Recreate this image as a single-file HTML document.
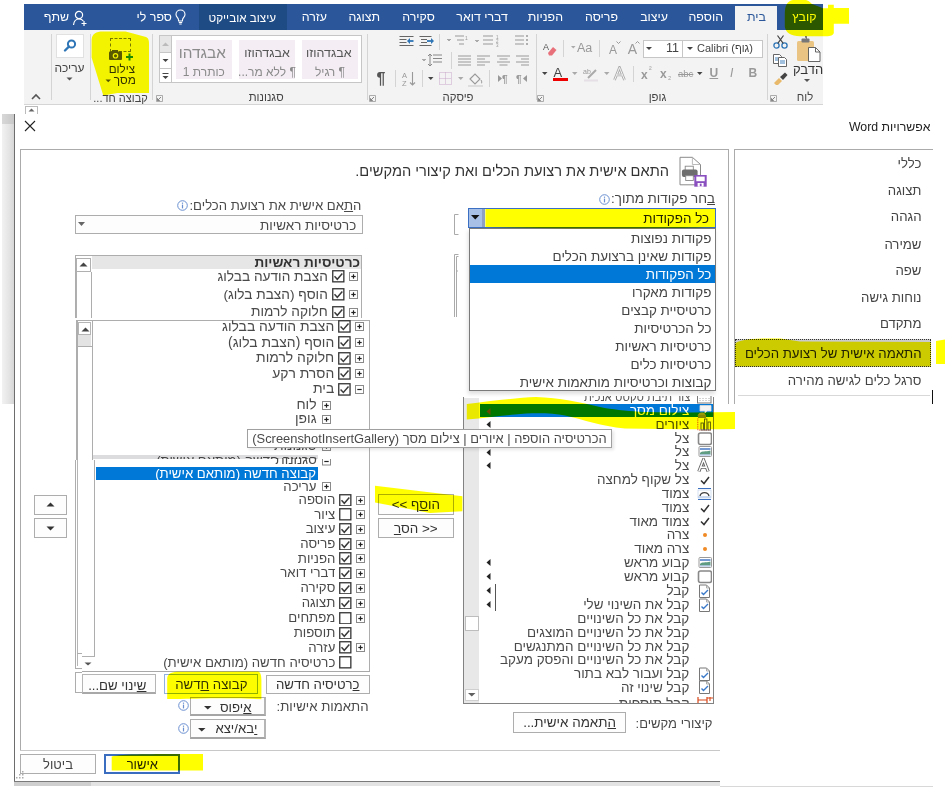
<!DOCTYPE html>
<html><head><meta charset="utf-8"><style>
html,body{margin:0;padding:0;background:#fff;width:945px;height:788px;overflow:hidden}
#r{position:relative;width:945px;height:788px;overflow:hidden;font-family:"Liberation Sans", sans-serif}
#r>*{position:absolute;white-space:nowrap;margin:0;padding:0}
</style></head><body><div id="r">
<div style="left:24px;top:4px;width:799px;height:26px;background:#2b579a;"></div>
<div style="left:199px;top:4px;width:88px;height:26px;background:#1f4b85;"></div>
<div style="left:735px;top:6px;width:42px;height:25px;background:#f3f3f3;"></div>
<div style="left:24px;top:30px;width:799px;height:74px;background:#f3f3f3;"></div>
<div style="left:24px;top:104px;width:799px;height:1px;background:#d5d5d5;"></div>
<div dir="rtl" style="right:876px;top:11.3px;font-size:12.4px;line-height:12.4px;color:#fff;">שתף</div>
<div dir="rtl" style="right:773px;top:11.3px;font-size:12.4px;line-height:12.4px;color:#fff;">ספר לי</div>
<div dir="rtl" style="right:618px;top:11.3px;font-size:12.4px;line-height:12.4px;color:#fff;">עזרה</div>
<div dir="rtl" style="right:565px;top:11.3px;font-size:12.4px;line-height:12.4px;color:#fff;">תצוגה</div>
<div dir="rtl" style="right:510px;top:11.3px;font-size:12.4px;line-height:12.4px;color:#fff;">סקירה</div>
<div dir="rtl" style="right:437px;top:11.3px;font-size:12.4px;line-height:12.4px;color:#fff;">דברי דואר</div>
<div dir="rtl" style="right:382px;top:11.3px;font-size:12.4px;line-height:12.4px;color:#fff;">הפניות</div>
<div dir="rtl" style="right:327px;top:11.3px;font-size:12.4px;line-height:12.4px;color:#fff;">פריסה</div>
<div dir="rtl" style="right:277px;top:11.3px;font-size:12.4px;line-height:12.4px;color:#fff;">עיצוב</div>
<div dir="rtl" style="right:222px;top:11.3px;font-size:12.4px;line-height:12.4px;color:#fff;">הוספה</div>
<div dir="rtl" style="right:128.5px;top:11.3px;font-size:12.4px;line-height:12.4px;color:#fff;">קובץ</div>
<div dir="rtl" style="right:179px;top:11.3px;font-size:12.4px;line-height:12.4px;color:#2b579a;">בית</div>
<div dir="rtl" style="right:669px;top:11.65px;font-size:11.7px;line-height:11.7px;color:#fff;">עיצוב אובייקט</div>
<svg style="left:72px;top:10px;" width="16" height="16" viewBox="0 0 16 16"><circle cx="7" cy="5" r="3.6" fill="none" stroke="#fff" stroke-width="1.2"/><path d="M1.5 15 C2 10.5 4 9 7 9 C9 9 10.5 9.8 11.3 11" fill="none" stroke="#fff" stroke-width="1.2"/><path d="M12 11v5M9.5 13.5h5" stroke="#fff" stroke-width="1.2"/></svg>
<svg style="left:175px;top:9px;" width="11" height="16" viewBox="0 0 11 16"><path d="M5.5 1 C2.8 1 1 3 1 5.4 C1 7.5 2.6 8.6 3.3 10 L3.6 12 H7.4 L7.7 10 C8.4 8.6 10 7.5 10 5.4 C10 3 8.2 1 5.5 1Z" fill="none" stroke="#fff" stroke-width="1.1"/><path d="M3.8 13.5h3.4M4.3 15h2.4" stroke="#fff" stroke-width="1"/></svg>
<div style="left:51.4px;top:34px;width:1px;height:66px;background:#d4d4d4;"></div>
<div style="left:90px;top:34px;width:1px;height:66px;background:#d4d4d4;"></div>
<div style="left:152px;top:34px;width:1px;height:66px;background:#d4d4d4;"></div>
<div style="left:367.4px;top:34px;width:1px;height:66px;background:#d4d4d4;"></div>
<div style="left:535.5px;top:34px;width:1px;height:66px;background:#d4d4d4;"></div>
<div style="left:766.7px;top:34px;width:1px;height:66px;background:#d4d4d4;"></div>
<svg style="left:31px;top:93px;" width="10" height="7" viewBox="0 0 10 7"><path d="M1 6 L5 2 L9 6" fill="none" stroke="#555" stroke-width="1.6"/></svg>
<div style="left:56px;top:34px;width:27.5px;height:24px;background:#fff;box-sizing:border-box;border:1px solid #e1e1e1;"></div>
<svg style="left:62px;top:38px;" width="16" height="16" viewBox="0 0 16 16"><circle cx="9.5" cy="6" r="3.6" fill="none" stroke="#2e75b6" stroke-width="2"/><path d="M7 8.5 L3 12.5" stroke="#2e75b6" stroke-width="2.4" stroke-linecap="round"/></svg>
<div dir="rtl" style="left:-330.5px;width:800px;text-align:center;top:61.5px;font-size:12px;line-height:12px;color:#444;">עריכה</div>
<svg style="left:66px;top:77px;" width="8" height="5" viewBox="0 0 8 5"><path d="M0.5 0.5 H6.5 L3.5 3.5Z" fill="#555"/></svg>
<div style="left:110.2px;top:37.7px;width:20.5px;height:14.3px;box-sizing:border-box;border:1px dashed #777;"></div>
<svg style="left:108px;top:49px;" width="27" height="12" viewBox="0 0 27 12"><rect x="1" y="2.5" width="13" height="8.5" rx="1" fill="#595959"/><rect x="4" y="1" width="6" height="2.5" fill="#595959"/><circle cx="7.5" cy="6.8" r="2.8" fill="#f3f3f3"/><circle cx="7.5" cy="6.8" r="1.6" fill="#595959"/><path d="M21.5 4.5v7M18 8h7" stroke="#1e8a3c" stroke-width="2"/></svg>
<div dir="rtl" style="left:-278.2px;width:800px;text-align:center;top:63.4px;font-size:11.6px;line-height:11.6px;color:#333;">צילום</div>
<div dir="rtl" style="left:-275.2px;width:800px;text-align:center;top:75.1px;font-size:11.8px;line-height:11.8px;color:#333;">מסך</div>
<svg style="left:105px;top:79px;" width="7" height="4" viewBox="0 0 7 4"><path d="M0.5 0.5 H6 L3.25 3.3Z" fill="#555"/></svg>
<div dir="rtl" style="left:-279.5px;width:800px;text-align:center;top:92.5px;font-size:11px;line-height:11px;color:#444;">קבוצה חד...</div>
<svg style="left:156px;top:94.5px;" width="7" height="7" viewBox="0 0 7 7"><path d="M0.5 0.5 H6.5 V6.5 H0.5Z" fill="none" stroke="#999" stroke-width="0.8" stroke-dasharray="0"/><path d="M1.5 5.5 L5 2 M1.5 3.2 V5.5 H3.8" fill="none" stroke="#777" stroke-width="0.9"/></svg>
<svg style="left:368.5px;top:94.5px;" width="7" height="7" viewBox="0 0 7 7"><path d="M0.5 0.5 H6.5 V6.5 H0.5Z" fill="none" stroke="#999" stroke-width="0.8" stroke-dasharray="0"/><path d="M1.5 5.5 L5 2 M1.5 3.2 V5.5 H3.8" fill="none" stroke="#777" stroke-width="0.9"/></svg>
<svg style="left:536.5px;top:94.5px;" width="7" height="7" viewBox="0 0 7 7"><path d="M0.5 0.5 H6.5 V6.5 H0.5Z" fill="none" stroke="#999" stroke-width="0.8" stroke-dasharray="0"/><path d="M1.5 5.5 L5 2 M1.5 3.2 V5.5 H3.8" fill="none" stroke="#777" stroke-width="0.9"/></svg>
<svg style="left:770px;top:94.5px;" width="7" height="7" viewBox="0 0 7 7"><path d="M0.5 0.5 H6.5 V6.5 H0.5Z" fill="none" stroke="#999" stroke-width="0.8" stroke-dasharray="0"/><path d="M1.5 5.5 L5 2 M1.5 3.2 V5.5 H3.8" fill="none" stroke="#777" stroke-width="0.9"/></svg>
<div style="left:159.2px;top:35.3px;width:203.3px;height:48.2px;background:#fff;box-sizing:border-box;border:1px solid #c6c6c6;"></div>
<div style="left:171.4px;top:35.3px;width:1px;height:48.2px;background:#c6c6c6;"></div>
<div style="left:160.2px;top:36.3px;width:11.2px;height:16px;background:#e6e6e6;"></div>
<div style="left:159.2px;top:52.3px;width:12.2px;height:1px;background:#c6c6c6;"></div>
<div style="left:159.2px;top:68px;width:12.2px;height:1px;background:#c6c6c6;"></div>
<svg style="left:161px;top:41px;" width="9" height="6" viewBox="0 0 9 6"><path d="M1 5 L4.5 1.5 L8 5Z" fill="#bbb"/></svg>
<svg style="left:161px;top:58px;" width="9" height="5" viewBox="0 0 9 5"><path d="M1.5 1 H7.5 L4.5 4Z" fill="#444"/></svg>
<svg style="left:161px;top:72px;" width="9" height="9" viewBox="0 0 9 9"><path d="M1.5 1.5 H7.5" stroke="#444" stroke-width="1"/><path d="M1.5 4 H7.5 L4.5 7Z" fill="#444"/></svg>
<div style="left:175.5px;top:40px;width:56.5px;height:38.6px;background:#f4eef4;"></div>
<div style="left:238.8px;top:40px;width:56.5px;height:38.6px;background:#f4eef4;"></div>
<div style="left:302px;top:40px;width:56px;height:38.6px;background:#f4eef4;"></div>
<div dir="rtl" style="left:-197.7px;width:800px;text-align:center;top:45.35px;font-size:15.3px;line-height:15.3px;color:#8a8a8a;">אבגדהו</div>
<div dir="rtl" style="left:-196.2px;width:800px;text-align:center;top:66px;font-size:12px;line-height:12px;color:#8a8a8a;">כותרת 1</div>
<div dir="rtl" style="left:-133px;width:800px;text-align:center;top:47.25px;font-size:12.5px;line-height:12.5px;color:#555;">אבגדהוזו</div>
<div dir="rtl" style="left:-133px;width:800px;text-align:center;top:66px;font-size:12px;line-height:12px;color:#8a8a8a;">¶ ללא מר...</div>
<div dir="rtl" style="left:-71.2px;width:800px;text-align:center;top:47.25px;font-size:12.5px;line-height:12.5px;color:#555;">אבגדהוזו</div>
<div dir="rtl" style="left:-70px;width:800px;text-align:center;top:66px;font-size:12px;line-height:12px;color:#8a8a8a;">¶ רגיל</div>
<div dir="rtl" style="left:-133.8px;width:800px;text-align:center;top:91.8px;font-size:11.4px;line-height:11.4px;color:#444;">סגנונות</div>
<svg style="left:399px;top:35px;" width="16" height="13" viewBox="0 0 16 13"><path d="M0.5 1.5h14M0.5 4.5h7M0.5 7.5h7M0.5 10.5h14" stroke="#666" stroke-width="1.1"/><path d="M9 6h5.5" stroke="#2e75b6" stroke-width="1.8"/><path d="M8 6 L11 3 V9Z" fill="#2e75b6"/></svg>
<svg style="left:418.5px;top:35px;" width="16" height="13" viewBox="0 0 16 13"><path d="M0.5 1.5h12M2 4.5h6M2 7.5h6M0.5 10.5h12" stroke="#666" stroke-width="1.1"/><path d="M8 6h5" stroke="#2e75b6" stroke-width="1.8"/><path d="M15 6 L12 3 V9Z" fill="#2e75b6"/></svg>
<div style="left:439px;top:34px;width:1px;height:16px;background:#d4d4d4;"></div>
<svg style="left:446px;top:34px;" width="24" height="14" viewBox="0 0 24 14"><path d="M1 5 L3 7 L5 5" fill="#aaa" stroke="#aaa"/><path d="M9 2h9M11 6h7M13 10h5" stroke="#999" stroke-width="1.1"/><text x="19" y="6" font-size="5" fill="#999">1</text></svg>
<svg style="left:474px;top:34px;" width="36" height="14" viewBox="0 0 36 14"><path d="M1 6 L3 8 L5 6" fill="#aaa" stroke="#aaa"/><path d="M9 2h10M9 6h10M9 10h10" stroke="#999" stroke-width="1.1"/><text x="22" y="5" font-size="4.5" fill="#999">1</text><text x="22" y="9" font-size="4.5" fill="#999">2</text><text x="22" y="13" font-size="4.5" fill="#999">3</text></svg>
<svg style="left:514px;top:34px;" width="16" height="14" viewBox="0 0 16 14"><path d="M1 2h9M1 6h9M1 10h9" stroke="#999" stroke-width="1.1"/><circle cx="13" cy="2" r="1" fill="#999"/><circle cx="13" cy="6" r="1" fill="#999"/><circle cx="13" cy="10" r="1" fill="#999"/></svg>
<svg style="left:421px;top:53px;" width="22" height="14" viewBox="0 0 22 14"><path d="M1 6 L3 8 L5 6" fill="#aaa" stroke="#aaa"/><path d="M12 2h9M12 5.5h9M12 9h9" stroke="#888" stroke-width="1.1"/><path d="M9 1v12M7 3l2-2 2 2M7 11l2 2 2-2" fill="none" stroke="#888" stroke-width="1"/></svg>
<div style="left:450.6px;top:52px;width:1px;height:17px;background:#d4d4d4;"></div>
<svg style="left:457.8px;top:54.5px;" width="13" height="11" viewBox="0 0 13 11"><path d="M0 1h13M0 4h13M0 7h13M0 10h13" stroke="#999" stroke-width="1.1"/></svg>
<svg style="left:477px;top:54.5px;" width="13" height="11" viewBox="0 0 13 11"><path d="M0 1h13M0 4h8M0 7h13M0 10h8" stroke="#999" stroke-width="1.1"/></svg>
<svg style="left:496.5px;top:54.5px;" width="13" height="11" viewBox="0 0 13 11"><path d="M0 1h13M2.5 4h8M0 7h13M2.5 10h8" stroke="#999" stroke-width="1.1"/></svg>
<svg style="left:516px;top:54.5px;" width="13" height="11" viewBox="0 0 13 11"><path d="M0 1h13M5 4h8M0 7h13M5 10h8" stroke="#999" stroke-width="1.1"/></svg>
<div dir="rtl" style="left:-19px;width:800px;text-align:center;top:71px;font-size:16px;line-height:16px;color:#555;font-weight:bold;">¶</div>
<div style="left:394.5px;top:70px;width:1px;height:17px;background:#d4d4d4;"></div>
<svg style="left:402px;top:71px;" width="14" height="16" viewBox="0 0 14 16"><text x="0" y="7" font-size="7.5" fill="#999" font-family="Liberation Sans">A</text><text x="0" y="15" font-size="7.5" fill="#999" font-family="Liberation Sans">Z</text><path d="M10.5 1v13M8 11.5l2.5 2.5 2.5-2.5" fill="none" stroke="#999" stroke-width="1.1"/></svg>
<div style="left:421.8px;top:70px;width:1px;height:17px;background:#d4d4d4;"></div>
<svg style="left:428px;top:77px;" width="6" height="4" viewBox="0 0 6 4"><path d="M0 0H5.5L2.75 3Z" fill="#444"/></svg>
<svg style="left:439px;top:72px;" width="13" height="13" viewBox="0 0 13 13"><path d="M0.5 0.5h12v12h-12zM6.5 0.5v12M0.5 6.5h12" fill="none" stroke="#c9a7c9" stroke-width="1" stroke-dasharray="1 1"/></svg>
<svg style="left:458px;top:77px;" width="6" height="4" viewBox="0 0 6 4"><path d="M0 0H5.5L2.75 3Z" fill="#aaa"/></svg>
<svg style="left:467px;top:71px;" width="17" height="16" viewBox="0 0 17 16"><path d="M3 8 L8 3 L13 8 L8 13Z" fill="none" stroke="#999" stroke-width="1.1"/><path d="M14 9c1 1.5 1 3 0 3.5" fill="none" stroke="#999"/><rect x="1" y="14" width="15" height="2" fill="#ddd"/></svg>
<div style="left:489px;top:70px;width:1px;height:17px;background:#d4d4d4;"></div>
<svg style="left:497px;top:73px;" width="12" height="11" viewBox="0 0 12 11"><path d="M1 2 L5 5.5 L1 9Z" fill="#999"/><text x="5" y="10" font-size="10" font-weight="bold" fill="#999" font-family="Liberation Sans">¶</text></svg>
<svg style="left:516px;top:73px;" width="12" height="11" viewBox="0 0 12 11"><text x="0" y="10" font-size="10" font-weight="bold" fill="#999" font-family="Liberation Sans">¶</text><path d="M11 2 L7 5.5 L11 9Z" fill="#999"/></svg>
<div dir="rtl" style="left:58px;width:800px;text-align:center;top:91.8px;font-size:11.4px;line-height:11.4px;color:#444;">פיסקה</div>
<div style="left:642.6px;top:39.6px;width:40.2px;height:18px;background:#fff;box-sizing:border-box;border:1px solid #c6c6c6;"></div>
<div style="left:682px;top:39.6px;width:80.5px;height:18px;background:#fff;box-sizing:border-box;border:1px solid #c6c6c6;"></div>
<svg style="left:646px;top:47px;" width="7" height="4" viewBox="0 0 7 4"><path d="M0 0H6L3 3Z" fill="#444"/></svg>
<svg style="left:687px;top:47px;" width="7" height="4" viewBox="0 0 7 4"><path d="M0 0H6L3 3Z" fill="#444"/></svg>
<div dir="ltr" style="right:266px;top:42.25px;font-size:12.5px;line-height:12.5px;color:#444;">11</div>
<div dir="ltr" style="left:697px;top:43px;font-size:11px;line-height:11px;color:#444;">Calibri (גוף)</div>
<svg style="left:543px;top:42px;" width="14" height="14" viewBox="0 0 14 14"><text x="0" y="8" font-size="9" fill="#555" font-family="Liberation Sans">A</text><path d="M5 11 L10 5 L13.5 8 L9 13.5 H6Z" fill="#e8707a"/></svg>
<div style="left:562.8px;top:40px;width:1px;height:17px;background:#d4d4d4;"></div>
<svg style="left:571px;top:46px;" width="5" height="3" viewBox="0 0 5 3"><path d="M0 0H4.5L2.25 2.5Z" fill="#aaa"/></svg>
<div dir="ltr" style="left:577px;top:42.25px;font-size:12.5px;line-height:12.5px;color:#999;">Aa</div>
<div style="left:599.4px;top:40px;width:1px;height:17px;background:#d4d4d4;"></div>
<div dir="ltr" style="left:609px;top:44px;font-size:12px;line-height:12px;color:#999;">A</div>
<svg style="left:616px;top:41px;" width="5" height="4" viewBox="0 0 5 4"><path d="M0.5 0.5L2.5 2.5L4.5 0.5" fill="none" stroke="#999"/></svg>
<div dir="ltr" style="left:627.8px;top:42px;font-size:14px;line-height:14px;color:#999;">A</div>
<svg style="left:635px;top:40px;" width="5" height="4" viewBox="0 0 5 4"><path d="M0.5 3.5L2.5 1.5L4.5 3.5" fill="none" stroke="#999"/></svg>
<svg style="left:542px;top:72px;" width="6" height="4" viewBox="0 0 6 4"><path d="M0 0H5.5L2.75 3Z" fill="#444"/></svg>
<div dir="ltr" style="left:553.5px;top:65.5px;font-size:13px;line-height:13px;color:#444;">A</div>
<div style="left:553px;top:78px;width:15px;height:3px;background:#e00;"></div>
<svg style="left:572px;top:72px;" width="6" height="4" viewBox="0 0 6 4"><path d="M0 0H5.5L2.75 3Z" fill="#aaa"/></svg>
<svg style="left:583px;top:67px;" width="15" height="15" viewBox="0 0 15 15"><text x="0" y="7" font-size="7" fill="#999" font-family="Liberation Sans">ab</text><path d="M5 11 L13 3" stroke="#aaa" stroke-width="2"/><rect x="1" y="12.5" width="14" height="2" fill="#e6e0e6"/></svg>
<svg style="left:604px;top:72px;" width="6" height="4" viewBox="0 0 6 4"><path d="M0 0H5.5L2.75 3Z" fill="#aaa"/></svg>
<svg style="left:613px;top:66px;" width="13" height="15" viewBox="0 0 13 15"><path d="M1.5 14 L6.5 1.5 L11.5 14 M3.6 9 H9.4" fill="none" stroke="#aaa" stroke-width="2.6"/><path d="M1.5 14 L6.5 1.5 L11.5 14 M3.6 9 H9.4" fill="none" stroke="#f3f3f3" stroke-width="1"/></svg>
<div style="left:632.6px;top:66px;width:1px;height:16px;background:#d4d4d4;"></div>
<div dir="ltr" style="left:641px;top:68.5px;font-size:12px;line-height:12px;color:#999;font-weight:bold;">x</div>
<div dir="ltr" style="left:649px;top:66px;font-size:8px;line-height:8px;color:#999;">²</div>
<div dir="ltr" style="left:660px;top:68px;font-size:12px;line-height:12px;color:#999;font-weight:bold;">x</div>
<div dir="ltr" style="left:668px;top:73px;font-size:8px;line-height:8px;color:#999;">₂</div>
<div dir="ltr" style="left:678px;top:69.25px;font-size:9.5px;line-height:9.5px;color:#999;text-decoration:line-through;">abc</div>
<svg style="left:697px;top:72px;" width="6" height="4" viewBox="0 0 6 4"><path d="M0 0H5.5L2.75 3Z" fill="#444"/></svg>
<div dir="ltr" style="left:709.5px;top:67px;font-size:12px;line-height:12px;color:#999;font-weight:bold;text-decoration:underline;">U</div>
<div dir="ltr" style="left:730px;top:67px;font-size:12px;line-height:12px;color:#999;font-style:italic;">I</div>
<div dir="ltr" style="left:748.5px;top:67px;font-size:12px;line-height:12px;color:#999;font-weight:bold;">B</div>
<div dir="rtl" style="left:257.5px;width:800px;text-align:center;top:91.8px;font-size:11.4px;line-height:11.4px;color:#444;">גופן</div>
<svg style="left:773px;top:35px;" width="15" height="14" viewBox="0 0 15 14"><circle cx="3.5" cy="10.5" r="2.6" fill="none" stroke="#2e75b6" stroke-width="1.3"/><circle cx="11.5" cy="10.5" r="2.6" fill="none" stroke="#2e75b6" stroke-width="1.3"/><path d="M4.8 8.3 L10.5 0.5 M10.2 8.3 L4.5 0.5" stroke="#444" stroke-width="1.2"/></svg>
<svg style="left:773px;top:54px;" width="15" height="13" viewBox="0 0 15 13"><path d="M0.5 0.5h6l2 2v7h-8z" fill="#fff" stroke="#555" stroke-width="0.9"/><path d="M5.5 3.5h6l2 2v7h-8z" fill="#fff" stroke="#555" stroke-width="0.9"/><path d="M2 4h3M2 6h3M7 7h5M7 9h5" stroke="#2e75b6" stroke-width="0.9"/></svg>
<svg style="left:773px;top:72px;" width="15" height="13" viewBox="0 0 15 13"><path d="M1 11 L6 6 L9 9 L4 14Z" fill="#e8b96b"/><path d="M7 5 L12 0.5 L14.5 3 L10 8Z" fill="#444"/></svg>
<svg style="left:796px;top:36px;" width="27" height="26" viewBox="0 0 27 26"><rect x="1" y="5" width="17" height="20" rx="1.5" fill="#eac483"/><rect x="5.5" y="2.5" width="8" height="4" rx="1" fill="#777"/><path d="M9 0.5h1.5v2.5" stroke="#777"/><path d="M12.5 11.5h7l4.5 4.5v9.5h-11.5z" fill="#fff" stroke="#555" stroke-width="0.9"/><path d="M19.5 11.5v4.5h4.5" fill="none" stroke="#555" stroke-width="0.9"/></svg>
<div dir="rtl" style="left:408px;width:800px;text-align:center;top:63px;font-size:13px;line-height:13px;color:#333;">הדבק</div>
<svg style="left:804px;top:79px;" width="7" height="4" viewBox="0 0 7 4"><path d="M0 0H6L3 3Z" fill="#555"/></svg>
<div dir="rtl" style="left:405px;width:800px;text-align:center;top:91.8px;font-size:11.4px;line-height:11.4px;color:#444;">לוח</div>
<div style="left:25.4px;top:106px;width:12.6px;height:8px;background:#fff;box-sizing:border-box;border:1px solid #bbb;border-bottom:none;"></div>
<svg style="left:28px;top:107.5px;" width="7" height="4" viewBox="0 0 7 4"><path d="M0.5 3.5 L3.5 0.5 L6.5 3.5Z" fill="#666"/></svg>
<div style="left:2px;top:114px;width:12px;height:290px;background:linear-gradient(to right,#f2f2f2,#e4e4e4 60%,#d6d6d6)"></div>
<div style="left:2px;top:114px;width:12px;height:9.5px;background:linear-gradient(to right,#d8d8d8,#c8c8c8);"></div>
<div style="left:14px;top:114px;width:1px;height:667px;background:#6d6d6d;"></div>
<svg style="left:24px;top:120px;" width="12" height="12" viewBox="0 0 12 12"><path d="M1 1 L11 11 M11 1 L1 11" stroke="#222" stroke-width="1.1"/></svg>
<div dir="rtl" style="right:14.6px;top:120.85px;font-size:12.3px;line-height:12.3px;color:#222;">אפשרויות Word</div>
<div style="left:20px;top:149px;width:708px;height:1px;background:#ababab;"></div>
<div style="left:20px;top:149px;width:1px;height:602px;background:#ababab;"></div>
<div style="left:728px;top:149px;width:1px;height:255px;background:#ababab;"></div>
<div style="left:20px;top:750px;width:700px;height:1px;background:#c8c8c8;"></div>
<div style="left:734px;top:149px;width:199px;height:1px;background:#ababab;"></div>
<div style="left:734px;top:149px;width:1px;height:255px;background:#ababab;"></div>
<div style="left:735px;top:339.4px;width:196px;height:27.3px;background:#cbcbcb;box-sizing:border-box;border:1px dotted #333;"></div>
<div dir="rtl" style="right:23.5px;top:156.9px;font-size:13.2px;line-height:13.2px;color:#444;">כללי</div>
<div dir="rtl" style="right:23.5px;top:183.7px;font-size:13.2px;line-height:13.2px;color:#444;">תצוגה</div>
<div dir="rtl" style="right:23.5px;top:210.4px;font-size:13.2px;line-height:13.2px;color:#444;">הגהה</div>
<div dir="rtl" style="right:23.5px;top:237.6px;font-size:13.2px;line-height:13.2px;color:#444;">שמירה</div>
<div dir="rtl" style="right:23.5px;top:264.4px;font-size:13.2px;line-height:13.2px;color:#444;">שפה</div>
<div dir="rtl" style="right:23.5px;top:291.4px;font-size:13.2px;line-height:13.2px;color:#444;">נוחות גישה</div>
<div dir="rtl" style="right:23.5px;top:317.4px;font-size:13.2px;line-height:13.2px;color:#444;">מתקדם</div>
<div dir="rtl" style="right:23.5px;top:346.8px;font-size:13.2px;line-height:13.2px;color:#222;">התאמה אישית של רצועת הכלים</div>
<div dir="rtl" style="right:23.5px;top:374.2px;font-size:13.2px;line-height:13.2px;color:#444;">סרגל כלים לגישה מהירה</div>
<div style="left:738px;top:394.5px;width:192px;height:1px;background:#d8d8d8;"></div>
<div style="left:932px;top:390px;width:1px;height:14px;background:#111;"></div>
<div style="left:20.3px;top:754.4px;width:75.4px;height:20px;background:#fdfdfd;box-sizing:border-box;border:1px solid #adadad;"></div>
<div dir="rtl" style="left:-342px;width:800px;text-align:center;top:758px;font-size:13px;line-height:13px;color:#444;">ביטול</div>
<div style="left:104.4px;top:754.4px;width:75.6px;height:20px;background:#fdfdfd;box-sizing:border-box;border:2px solid #3a6cc0;"></div>
<div dir="rtl" style="left:-257.7px;width:800px;text-align:center;top:758px;font-size:13px;line-height:13px;color:#222;">אישור</div>
<svg style="left:16px;top:771px;" width="9" height="8" viewBox="0 0 9 8"><g fill="#aaa"><rect x="6" y="0" width="1.5" height="1.5"/><rect x="3" y="3" width="1.5" height="1.5"/><rect x="6" y="3" width="1.5" height="1.5"/><rect x="0" y="6" width="1.5" height="1.5"/><rect x="3" y="6" width="1.5" height="1.5"/><rect x="6" y="6" width="1.5" height="1.5"/></g></svg>
<div style="left:14px;top:780.5px;width:706px;height:1px;background:#7a7a7a;"></div>
<div style="left:14px;top:781.5px;width:77px;height:4.5px;background:#cfcfcf;"></div>
<div style="left:91px;top:781.5px;width:629px;height:4.5px;background:#e3e3e3;"></div>
<div style="left:720px;top:785.5px;width:213px;height:1px;background:#d8d8d8;"></div>
<div dir="rtl" style="right:276px;top:164.2px;font-size:14.6px;line-height:14.6px;color:#333;">התאם אישית את רצועת הכלים ואת קיצורי המקשים.</div>
<svg style="left:679px;top:156px;" width="29" height="32" viewBox="0 0 29 32"><path d="M1 1.3 H13.4 L21.5 8.5 V28.8 H1 Z" fill="#fff" stroke="#8a8a8a" stroke-width="1"/><path d="M13.4 1.3 V8.5 H21.5" fill="none" stroke="#aaa" stroke-width="0.8"/><rect x="6.2" y="10.2" width="8.1" height="4.3" fill="#fff" stroke="#888" stroke-width="0.9"/><rect x="2.9" y="13.5" width="15.7" height="7.6" rx="2" fill="#6d6d6d"/><rect x="6.7" y="19.7" width="7.6" height="4.8" fill="#fff" stroke="#888" stroke-width="0.9"/><rect x="15.3" y="19" width="12.4" height="11.7" fill="#8a4fbf"/><rect x="17.3" y="20.6" width="8.4" height="4.6" fill="#fff"/><rect x="18.6" y="27" width="6" height="3.7" fill="#fff"/><rect x="20.8" y="27.6" width="1.8" height="2.5" fill="#8a4fbf"/></svg>
<div dir="rtl" style="right:230px;top:192.3px;font-size:13.4px;line-height:13.4px;color:#444;"><u>ב</u>חר פקודות מתוך:</div>
<svg style="left:599.3px;top:193.5px;" width="11" height="11" viewBox="0 0 11 11"><circle cx="5.5" cy="5.5" r="4.8" fill="#fff" stroke="#6a8fd0" stroke-width="1"/><rect x="4.9" y="4.6" width="1.2" height="3.8" fill="#6a8fd0"/><rect x="4.9" y="2.6" width="1.2" height="1.2" fill="#6a8fd0"/></svg>
<div style="left:468px;top:208px;width:248px;height:20px;background:#fff;box-sizing:border-box;border:1px solid #3b6fc4;"></div>
<div style="left:469px;top:209px;width:13.3px;height:18px;background:#a8c0e6;"></div>
<svg style="left:471px;top:215px;" width="9" height="5" viewBox="0 0 9 5"><path d="M0 0H8.5L4.25 4.5Z" fill="#111"/></svg>
<div style="left:482.3px;top:209px;width:3.1px;height:18px;background:#8ea0c4;"></div>
<div dir="rtl" style="right:236px;top:211.9px;font-size:13.4px;line-height:13.4px;color:#222;">כל הפקודות</div>
<svg style="left:453px;top:213px;" width="6" height="23" viewBox="0 0 6 23"><path d="M5.5 1.5 H1.5 V21.5 H5.5" fill="none" stroke="#aaa" stroke-width="1"/></svg>
<svg style="left:453px;top:253px;" width="6" height="66" viewBox="0 0 6 66"><path d="M5.5 1.5 H1.5 V64 M3.5 64 V3.5 H5.5 M3.5 18 H5" fill="none" stroke="#aaa" stroke-width="1"/></svg>
<div style="left:468.6px;top:227.7px;width:247.7px;height:163.8px;background:#fff;box-sizing:border-box;border:1px solid #7a7a7a;box-shadow:-1px 3px 4px rgba(0,0,0,0.13);"></div>
<div style="left:469.6px;top:265px;width:245.7px;height:18px;background:#0078d7;"></div>
<div dir="rtl" style="right:233.6px;top:231.9px;font-size:13.4px;line-height:13.4px;color:#444;">פקודות נפוצות</div>
<div dir="rtl" style="right:233.6px;top:249.9px;font-size:13.4px;line-height:13.4px;color:#444;">פקודות שאינן ברצועת הכלים</div>
<div dir="rtl" style="right:233.6px;top:267.9px;font-size:13.4px;line-height:13.4px;color:#fff;">כל הפקודות</div>
<div dir="rtl" style="right:233.6px;top:285.9px;font-size:13.4px;line-height:13.4px;color:#444;">פקודות מאקרו</div>
<div dir="rtl" style="right:233.6px;top:303.9px;font-size:13.4px;line-height:13.4px;color:#444;">כרטיסיית קבצים</div>
<div dir="rtl" style="right:233.6px;top:321.9px;font-size:13.4px;line-height:13.4px;color:#444;">כל הכרטיסיות</div>
<div dir="rtl" style="right:233.6px;top:339.9px;font-size:13.4px;line-height:13.4px;color:#444;">כרטיסיות ראשיות</div>
<div dir="rtl" style="right:233.6px;top:357.9px;font-size:13.4px;line-height:13.4px;color:#444;">כרטיסיות כלים</div>
<div dir="rtl" style="right:233.6px;top:375.9px;font-size:13.4px;line-height:13.4px;color:#444;">קבוצות וכרטיסיות מותאמות אישית</div>
<div style="left:462.7px;top:396.8px;width:251.3px;height:307.2px;background:#fff;box-sizing:border-box;border:1px solid #828282;border-top:none;"></div>
<div style="left:463.7px;top:397.8px;width:15.3px;height:305.2px;background:#e8e8e8;"></div>
<div style="left:464.8px;top:616px;width:14.2px;height:14.5px;background:#fff;box-sizing:border-box;border:1px solid #bdbdbd;"></div>
<div style="left:464.8px;top:689px;width:14.2px;height:12px;background:#fff;box-sizing:border-box;border:1px solid #cfcfcf;"></div>
<svg style="left:468px;top:693px;" width="8" height="4" viewBox="0 0 8 4"><path d="M0 0H7.5L3.75 3.5Z" fill="#606060"/></svg>
<div style="left:479.5px;top:397.8px;width:233.5px;height:5.7px;background:#fff;"></div>
<div style="left:480px;top:396px;width:233px;height:7.8px;overflow:hidden"><div dir="rtl" style="position:absolute;right:22.6px;top:-4.3px;font-size:11.3px;line-height:11.3px;color:#555">צור תיבת טקסט אנכית</div><svg style="position:absolute;left:216.5px;top:0px" width="15" height="8"><rect x="0.5" y="-3" width="13.5" height="10" fill="#fff" stroke="#777"/><path d="M3 2v4M6 2v4M9 2v4M12 2v4" stroke="#aaa" stroke-dasharray="1 1"/></svg></div>
<div style="left:479.5px;top:404px;width:233px;height:13.2px;background:#0078d7;"></div>
<div dir="rtl" style="right:255.7px;top:404.27px;font-size:13.45px;line-height:13.45px;color:#fff;">צילום מסך</div>
<svg style="left:696.5px;top:404px;" width="15" height="14" viewBox="0 0 15 14"><path d="M3 1.5 H14 V7 H10 L8 9 V7 H3Z" fill="#f4f4f4" stroke="#ddd" stroke-width="0.8"/><path d="M0.5 12 C1 9.5 3 8.5 5 8.5 C7 8.5 8.5 9.5 9 12Z" fill="#999"/><rect x="1" y="11" width="8" height="3" fill="#888"/></svg>
<svg style="left:485.5px;top:407.5px;" width="5" height="7" viewBox="0 0 5 7"><path d="M4.5 0 V7 L0.5 3.5Z" fill="#6b4a10"/></svg>
<div dir="rtl" style="right:255.7px;top:417.57px;font-size:13.45px;line-height:13.45px;color:#4a4a4a;">ציורים</div>
<svg style="left:696.5px;top:417.3px;" width="15" height="14" viewBox="0 0 15 14"><path d="M0.8 1.5 V13 H14" fill="none" stroke="#e04a1a" stroke-width="1" stroke-dasharray="1 0.8"/><rect x="4" y="6" width="2.4" height="7" fill="none" stroke="#555" stroke-width="0.9"/><rect x="7.5" y="2" width="2.4" height="11" fill="none" stroke="#555" stroke-width="0.9"/><rect x="11" y="5" width="2.4" height="8" fill="none" stroke="#555" stroke-width="0.9"/></svg>
<svg style="left:485.5px;top:420.8px;" width="5" height="7" viewBox="0 0 5 7"><path d="M4.5 0 V7 L0.5 3.5Z" fill="#222"/></svg>
<div dir="rtl" style="right:255.7px;top:431.97px;font-size:13.45px;line-height:13.45px;color:#4a4a4a;">צל</div>
<svg style="left:696.5px;top:431.7px;" width="15" height="14" viewBox="0 0 15 14"><rect x="1.5" y="1" width="13" height="11.5" rx="2" fill="#fff" stroke="#888" stroke-width="1.6"/></svg>
<svg style="left:485.5px;top:435.2px;" width="5" height="7" viewBox="0 0 5 7"><path d="M4.5 0 V7 L0.5 3.5Z" fill="#222"/></svg>
<div dir="rtl" style="right:255.7px;top:445.27px;font-size:13.45px;line-height:13.45px;color:#4a4a4a;">צל</div>
<svg style="left:696.5px;top:445px;" width="15" height="14" viewBox="0 0 15 14"><rect x="2" y="1.5" width="12.5" height="10" rx="1" fill="#fff" stroke="#9a9a9a" stroke-width="1"/><path d="M3 4 H13.5" stroke="#3a6fc0" stroke-width="1.4"/><path d="M3 8 C5 5.5 8 7 13.5 5.5 V9.5 H3Z" fill="#5f9c84"/><path d="M3 10 H13.5" stroke="#9ab7e0" stroke-width="1"/></svg>
<svg style="left:485.5px;top:448.5px;" width="5" height="7" viewBox="0 0 5 7"><path d="M4.5 0 V7 L0.5 3.5Z" fill="#222"/></svg>
<div dir="rtl" style="right:255.7px;top:458.67px;font-size:13.45px;line-height:13.45px;color:#4a4a4a;">צל</div>
<svg style="left:696.5px;top:458.4px;" width="15" height="14" viewBox="0 0 15 14"><path d="M1.8 13.5 L6.5 1.8 L11.2 13.5 M3.8 9.2 H9.2" fill="none" stroke="#666" stroke-width="3.2"/><path d="M1.8 13.5 L6.5 1.8 L11.2 13.5 M3.8 9.2 H9.2" fill="none" stroke="#fff" stroke-width="1.4"/></svg>
<svg style="left:485.5px;top:461.9px;" width="5" height="7" viewBox="0 0 5 7"><path d="M4.5 0 V7 L0.5 3.5Z" fill="#222"/></svg>
<div dir="rtl" style="right:255.7px;top:473.07px;font-size:13.45px;line-height:13.45px;color:#4a4a4a;">צל שקוף למחצה</div>
<svg style="left:696.5px;top:472.8px;" width="15" height="14" viewBox="0 0 15 14"><path d="M4 7.5 L7 10.5 L12 4" fill="none" stroke="#333" stroke-width="1.5"/></svg>
<div dir="rtl" style="right:255.7px;top:487.07px;font-size:13.45px;line-height:13.45px;color:#4a4a4a;">צמוד</div>
<svg style="left:696.5px;top:486.8px;" width="15" height="14" viewBox="0 0 15 14"><path d="M1 1.5h13M1 12.5h13" stroke="#3a6fc0" stroke-width="1.2"/><path d="M3 9 C4 4.5 11 4.5 12 9" fill="none" stroke="#444" stroke-width="1.4"/><path d="M1 10h13" stroke="#9ab7e0"/><rect x="1" y="3" width="13" height="8" fill="none" stroke="#b8cbe8" stroke-width="0.6"/></svg>
<div dir="rtl" style="right:255.7px;top:501.17px;font-size:13.45px;line-height:13.45px;color:#4a4a4a;">צמוד</div>
<svg style="left:696.5px;top:500.9px;" width="15" height="14" viewBox="0 0 15 14"><path d="M4 7.5 L7 10.5 L12 4" fill="none" stroke="#333" stroke-width="1.5"/></svg>
<div dir="rtl" style="right:255.7px;top:514.57px;font-size:13.45px;line-height:13.45px;color:#4a4a4a;">צמוד מאוד</div>
<svg style="left:696.5px;top:514.3px;" width="15" height="14" viewBox="0 0 15 14"><path d="M4 7.5 L7 10.5 L12 4" fill="none" stroke="#333" stroke-width="1.5"/></svg>
<div dir="rtl" style="right:255.7px;top:528.27px;font-size:13.45px;line-height:13.45px;color:#4a4a4a;">צרה</div>
<svg style="left:696.5px;top:528px;" width="15" height="14" viewBox="0 0 15 14"><circle cx="8" cy="7" r="2" fill="#f08a24"/></svg>
<div dir="rtl" style="right:255.7px;top:542.27px;font-size:13.45px;line-height:13.45px;color:#4a4a4a;">צרה מאוד</div>
<svg style="left:696.5px;top:542px;" width="15" height="14" viewBox="0 0 15 14"><circle cx="8" cy="7" r="2" fill="#f08a24"/></svg>
<div dir="rtl" style="right:255.7px;top:555.77px;font-size:13.45px;line-height:13.45px;color:#4a4a4a;">קבוע מראש</div>
<svg style="left:696.5px;top:555.5px;" width="15" height="14" viewBox="0 0 15 14"><rect x="2" y="1.5" width="12.5" height="10" rx="1" fill="#fff" stroke="#9a9a9a" stroke-width="1"/><path d="M3 4 H13.5" stroke="#3a6fc0" stroke-width="1.4"/><path d="M3 8 C5 5.5 8 7 13.5 5.5 V9.5 H3Z" fill="#5f9c84"/><path d="M3 10 H13.5" stroke="#9ab7e0" stroke-width="1"/></svg>
<svg style="left:485.5px;top:559px;" width="5" height="7" viewBox="0 0 5 7"><path d="M4.5 0 V7 L0.5 3.5Z" fill="#222"/></svg>
<div dir="rtl" style="right:255.7px;top:569.88px;font-size:13.45px;line-height:13.45px;color:#4a4a4a;">קבוע מראש</div>
<svg style="left:696.5px;top:569.6px;" width="15" height="14" viewBox="0 0 15 14"><rect x="1.5" y="1" width="13" height="11.5" rx="2" fill="#fff" stroke="#888" stroke-width="1.6"/></svg>
<svg style="left:485.5px;top:573.1px;" width="5" height="7" viewBox="0 0 5 7"><path d="M4.5 0 V7 L0.5 3.5Z" fill="#222"/></svg>
<div dir="rtl" style="right:255.7px;top:583.88px;font-size:13.45px;line-height:13.45px;color:#4a4a4a;">קבל</div>
<svg style="left:696.5px;top:583.6px;" width="15" height="14" viewBox="0 0 15 14"><path d="M2.5 1 h7 l3 3 v9.5 h-10z" fill="#fff" stroke="#777" stroke-width="1"/><path d="M9.5 1 v3 h3" fill="none" stroke="#999" stroke-width="0.8"/><path d="M4.5 8.5 L6.5 10.5 L11 6" fill="none" stroke="#3a78c8" stroke-width="1.4"/></svg>
<svg style="left:485.5px;top:587.1px;" width="5" height="7" viewBox="0 0 5 7"><path d="M4.5 0 V7 L0.5 3.5Z" fill="#222"/></svg>
<div dir="rtl" style="right:255.7px;top:597.98px;font-size:13.45px;line-height:13.45px;color:#4a4a4a;">קבל את השינוי שלי</div>
<svg style="left:696.5px;top:597.7px;" width="15" height="14" viewBox="0 0 15 14"><path d="M2.5 1 h7 l3 3 v9.5 h-10z" fill="#fff" stroke="#777" stroke-width="1"/><path d="M9.5 1 v3 h3" fill="none" stroke="#999" stroke-width="0.8"/><path d="M4.5 8.5 L6.5 10.5 L11 6" fill="none" stroke="#3a78c8" stroke-width="1.4"/></svg>
<svg style="left:485.5px;top:601.2px;" width="5" height="7" viewBox="0 0 5 7"><path d="M4.5 0 V7 L0.5 3.5Z" fill="#222"/></svg>
<div dir="rtl" style="right:255.7px;top:611.67px;font-size:13.45px;line-height:13.45px;color:#4a4a4a;">קבל את כל השינויים</div>
<div dir="rtl" style="right:255.7px;top:625.67px;font-size:13.45px;line-height:13.45px;color:#4a4a4a;">קבל את כל השינויים המוצגים</div>
<div dir="rtl" style="right:255.7px;top:639.77px;font-size:13.45px;line-height:13.45px;color:#4a4a4a;">קבל את כל השינויים המתנגשים</div>
<div dir="rtl" style="right:255.7px;top:653.27px;font-size:13.45px;line-height:13.45px;color:#4a4a4a;">קבל את כל השינויים והפסק מעקב</div>
<div dir="rtl" style="right:255.7px;top:667.27px;font-size:13.45px;line-height:13.45px;color:#4a4a4a;">קבל ועבור לבא בתור</div>
<svg style="left:696.5px;top:667px;" width="15" height="14" viewBox="0 0 15 14"><path d="M2.5 1 h7 l3 3 v9.5 h-10z" fill="#fff" stroke="#777" stroke-width="1"/><path d="M9.5 1 v3 h3" fill="none" stroke="#999" stroke-width="0.8"/><path d="M4.5 8.5 L6.5 10.5 L11 6" fill="none" stroke="#3a78c8" stroke-width="1.4"/></svg>
<div dir="rtl" style="right:255.7px;top:680.67px;font-size:13.45px;line-height:13.45px;color:#4a4a4a;">קבל שינוי זה</div>
<svg style="left:696.5px;top:680.4px;" width="15" height="14" viewBox="0 0 15 14"><path d="M2.5 1 h7 l3 3 v9.5 h-10z" fill="#fff" stroke="#777" stroke-width="1"/><path d="M9.5 1 v3 h3" fill="none" stroke="#999" stroke-width="0.8"/><path d="M4.5 8.5 L6.5 10.5 L11 6" fill="none" stroke="#3a78c8" stroke-width="1.4"/></svg>
<div style="left:495px;top:584px;width:1px;height:27px;background:#555;"></div>
<div style="left:480px;top:697px;width:233px;height:6px;overflow:hidden"><div dir="rtl" style="position:absolute;right:23.5px;top:-0.5px;font-size:13.8px;line-height:13.8px;color:#4a4a4a">קבל תוספות</div><svg style="position:absolute;left:216.5px;top:-2px" width="16" height="9"><path d="M1 1.5h9v7h-9zM1 5h9" fill="none" stroke="#d9481a" stroke-width="1.2"/><path d="M13 0v6M10 3h6" stroke="#d9481a" stroke-width="1.1"/></svg></div>
<div dir="rtl" style="right:232.5px;top:716.5px;font-size:13px;line-height:13px;color:#4a4a4a;">קיצורי מקשים:</div>
<div style="left:513px;top:712.4px;width:113.3px;height:20.6px;background:#fdfdfd;box-sizing:border-box;border:1px solid #adadad;"></div>
<div dir="rtl" style="left:169.6px;width:800px;text-align:center;top:716.3px;font-size:13.4px;line-height:13.4px;color:#333;"><u>ה</u>תאמה אישית...</div>
<div style="left:378px;top:494.4px;width:75.7px;height:20.2px;background:#fdfdfd;box-sizing:border-box;border:1px solid #adadad;"></div>
<div dir="ltr" style="left:15.8px;width:800px;text-align:center;top:497.8px;font-size:13.4px;line-height:13.4px;color:#333;">&lt;&lt; הו<u>ס</u>ף</div>
<div style="left:378px;top:518.3px;width:75.7px;height:20.2px;background:#fdfdfd;box-sizing:border-box;border:1px solid #adadad;"></div>
<div dir="ltr" style="left:15.8px;width:800px;text-align:center;top:521.8px;font-size:13.4px;line-height:13.4px;color:#333;">הס<u>ר</u> &gt;&gt;</div>
<div style="left:34.3px;top:495.3px;width:32.3px;height:19.4px;background:#fdfdfd;box-sizing:border-box;border:1px solid #adadad;"></div>
<svg style="left:46px;top:502px;" width="9" height="5" viewBox="0 0 9 5"><path d="M0.5 4.5 L4.5 0.5 L8.5 4.5Z" fill="#333"/></svg>
<div style="left:34.3px;top:518px;width:32.3px;height:19.7px;background:#fdfdfd;box-sizing:border-box;border:1px solid #adadad;"></div>
<svg style="left:46px;top:526px;" width="9" height="5" viewBox="0 0 9 5"><path d="M0.5 0.5 L4.5 4.5 L8.5 0.5Z" fill="#333"/></svg>
<div dir="rtl" style="right:583.6px;top:198.93px;font-size:13.15px;line-height:13.15px;color:#4a4a4a;">ה<u>ת</u>אם אישית את רצועת הכלים:</div>
<svg style="left:176.8px;top:199.5px;" width="11" height="11" viewBox="0 0 11 11"><circle cx="5.5" cy="5.5" r="4.8" fill="#fff" stroke="#6a8fd0" stroke-width="1"/><rect x="4.9" y="4.6" width="1.2" height="3.8" fill="#6a8fd0"/><rect x="4.9" y="2.6" width="1.2" height="1.2" fill="#6a8fd0"/></svg>
<div style="left:74.5px;top:215.2px;width:288.3px;height:19.3px;background:#fdfdfd;box-sizing:border-box;border:1px solid #adadad;"></div>
<svg style="left:78px;top:222.3px;" width="8" height="5" viewBox="0 0 8 5"><path d="M0 0H7L3.5 4Z" fill="#666"/></svg>
<div dir="rtl" style="right:588.8px;top:218.8px;font-size:13.4px;line-height:13.4px;color:#4a4a4a;">כרטיסיות ראשיות</div>
<div style="left:74.5px;top:255px;width:287.9px;height:63px;background:#fff;box-sizing:border-box;border:1px solid #adadad;border-bottom:none;"></div>
<div style="left:92px;top:256px;width:269.4px;height:13px;background:#e6e6e6;"></div>
<div dir="rtl" style="right:585px;top:255.5px;font-size:13.6px;line-height:13.6px;color:#333;font-weight:bold;">כרטיסיות ראשיות</div>
<div style="left:76.4px;top:257.8px;width:15.1px;height:14.6px;background:#fff;box-sizing:border-box;border:1px solid #b0b0b0;"></div>
<svg style="left:79px;top:262px;" width="9" height="5" viewBox="0 0 9 5"><path d="M0.5 4.5 L4.5 0.5 L8.5 4.5Z" fill="#444"/></svg>
<div style="left:76.4px;top:272px;width:1px;height:45.7px;background:#b0b0b0;"></div>
<div style="left:90.5px;top:272px;width:1px;height:45.7px;background:#adadad;"></div>
<svg style="left:349.4px;top:272px;" width="9" height="9" viewBox="0 0 9 9"><rect x="0.5" y="0.5" width="8" height="8" fill="#fff" stroke="#8a8a8a"/><path d="M2.3 4.5h4.4" stroke="#222" stroke-width="1.2"/><path d="M4.5 2.3v4.4" stroke="#222" stroke-width="1.2"/></svg>
<svg style="left:332.2px;top:270.2px;" width="12.6" height="12.6" viewBox="0 0 12.6 12.6"><rect x="0.75" y="0.75" width="11.1" height="11.1" fill="#fff" stroke="#333" stroke-width="1.3"/><path d="M2.52 6.3 L5.292 9.324 L10.331999999999999 3.528" fill="none" stroke="#3a3a3a" stroke-width="1.45"/></svg>
<div dir="rtl" style="right:617.2px;top:269.67px;font-size:13.66px;line-height:13.66px;color:#4a4a4a;">הצבת הודעה בבלוג</div>
<svg style="left:349.4px;top:290px;" width="9" height="9" viewBox="0 0 9 9"><rect x="0.5" y="0.5" width="8" height="8" fill="#fff" stroke="#8a8a8a"/><path d="M2.3 4.5h4.4" stroke="#222" stroke-width="1.2"/><path d="M4.5 2.3v4.4" stroke="#222" stroke-width="1.2"/></svg>
<svg style="left:332.2px;top:288.2px;" width="12.6" height="12.6" viewBox="0 0 12.6 12.6"><rect x="0.75" y="0.75" width="11.1" height="11.1" fill="#fff" stroke="#333" stroke-width="1.3"/><path d="M2.52 6.3 L5.292 9.324 L10.331999999999999 3.528" fill="none" stroke="#3a3a3a" stroke-width="1.45"/></svg>
<div dir="rtl" style="right:617.2px;top:287.67px;font-size:13.66px;line-height:13.66px;color:#4a4a4a;">הוסף (הצבת בלוג)</div>
<svg style="left:349.4px;top:307.5px;" width="9" height="9" viewBox="0 0 9 9"><rect x="0.5" y="0.5" width="8" height="8" fill="#fff" stroke="#8a8a8a"/><path d="M2.3 4.5h4.4" stroke="#222" stroke-width="1.2"/><path d="M4.5 2.3v4.4" stroke="#222" stroke-width="1.2"/></svg>
<svg style="left:332.2px;top:305.7px;" width="12.6" height="12.6" viewBox="0 0 12.6 12.6"><rect x="0.75" y="0.75" width="11.1" height="11.1" fill="#fff" stroke="#333" stroke-width="1.3"/><path d="M2.52 6.3 L5.292 9.324 L10.331999999999999 3.528" fill="none" stroke="#3a3a3a" stroke-width="1.45"/></svg>
<div dir="rtl" style="right:617.2px;top:305.17px;font-size:13.66px;line-height:13.66px;color:#4a4a4a;">חלוקה לרמות</div>
<div style="left:75.5px;top:319.5px;width:294px;height:140.5px;background:#fff;box-sizing:border-box;border:1px solid #adadad;border-bottom:none;"></div>
<div style="left:77.3px;top:320px;width:1px;height:140px;background:#adadad;"></div>
<div style="left:91.5px;top:320px;width:1px;height:140px;background:#adadad;"></div>
<div style="left:77.8px;top:322px;width:13.7px;height:13px;background:#fff;box-sizing:border-box;border:1px solid #b5b5b5;"></div>
<svg style="left:80.5px;top:326.5px;" width="9" height="5" viewBox="0 0 9 5"><path d="M0.5 4.5 L4.5 0.5 L8.5 4.5Z" fill="#444"/></svg>
<div style="left:78.3px;top:335px;width:13.2px;height:11px;background:#e3e3e3;"></div>
<div style="left:78px;top:346px;width:13.5px;height:1px;background:#adadad;"></div>
<svg style="left:355px;top:322.2px;" width="9" height="9" viewBox="0 0 9 9"><rect x="0.5" y="0.5" width="8" height="8" fill="#fff" stroke="#8a8a8a"/><path d="M2.3 4.5h4.4" stroke="#222" stroke-width="1.2"/><path d="M4.5 2.3v4.4" stroke="#222" stroke-width="1.2"/></svg>
<svg style="left:338px;top:320.3px;" width="12.8" height="12.8" viewBox="0 0 12.8 12.8"><rect x="0.75" y="0.75" width="11.3" height="11.3" fill="#fff" stroke="#333" stroke-width="1.3"/><path d="M2.5600000000000005 6.4 L5.376 9.472 L10.496 3.5840000000000005" fill="none" stroke="#3a3a3a" stroke-width="1.45"/></svg>
<div dir="rtl" style="right:610.8px;top:319.75px;font-size:13.9px;line-height:13.9px;color:#4a4a4a;">הצבת הודעה בבלוג</div>
<svg style="left:355px;top:338px;" width="9" height="9" viewBox="0 0 9 9"><rect x="0.5" y="0.5" width="8" height="8" fill="#fff" stroke="#8a8a8a"/><path d="M2.3 4.5h4.4" stroke="#222" stroke-width="1.2"/><path d="M4.5 2.3v4.4" stroke="#222" stroke-width="1.2"/></svg>
<svg style="left:338px;top:336.1px;" width="12.8" height="12.8" viewBox="0 0 12.8 12.8"><rect x="0.75" y="0.75" width="11.3" height="11.3" fill="#fff" stroke="#333" stroke-width="1.3"/><path d="M2.5600000000000005 6.4 L5.376 9.472 L10.496 3.5840000000000005" fill="none" stroke="#3a3a3a" stroke-width="1.45"/></svg>
<div dir="rtl" style="right:610.8px;top:335.55px;font-size:13.9px;line-height:13.9px;color:#4a4a4a;">הוסף (הצבת בלוג)</div>
<svg style="left:355px;top:353.8px;" width="9" height="9" viewBox="0 0 9 9"><rect x="0.5" y="0.5" width="8" height="8" fill="#fff" stroke="#8a8a8a"/><path d="M2.3 4.5h4.4" stroke="#222" stroke-width="1.2"/><path d="M4.5 2.3v4.4" stroke="#222" stroke-width="1.2"/></svg>
<svg style="left:338px;top:351.9px;" width="12.8" height="12.8" viewBox="0 0 12.8 12.8"><rect x="0.75" y="0.75" width="11.3" height="11.3" fill="#fff" stroke="#333" stroke-width="1.3"/><path d="M2.5600000000000005 6.4 L5.376 9.472 L10.496 3.5840000000000005" fill="none" stroke="#3a3a3a" stroke-width="1.45"/></svg>
<div dir="rtl" style="right:610.8px;top:351.35px;font-size:13.9px;line-height:13.9px;color:#4a4a4a;">חלוקה לרמות</div>
<svg style="left:355px;top:369.3px;" width="9" height="9" viewBox="0 0 9 9"><rect x="0.5" y="0.5" width="8" height="8" fill="#fff" stroke="#8a8a8a"/><path d="M2.3 4.5h4.4" stroke="#222" stroke-width="1.2"/><path d="M4.5 2.3v4.4" stroke="#222" stroke-width="1.2"/></svg>
<svg style="left:338px;top:367.4px;" width="12.8" height="12.8" viewBox="0 0 12.8 12.8"><rect x="0.75" y="0.75" width="11.3" height="11.3" fill="#fff" stroke="#333" stroke-width="1.3"/><path d="M2.5600000000000005 6.4 L5.376 9.472 L10.496 3.5840000000000005" fill="none" stroke="#3a3a3a" stroke-width="1.45"/></svg>
<div dir="rtl" style="right:610.8px;top:366.85px;font-size:13.9px;line-height:13.9px;color:#4a4a4a;">הסרת רקע</div>
<svg style="left:355px;top:384.8px;" width="9" height="9" viewBox="0 0 9 9"><rect x="0.5" y="0.5" width="8" height="8" fill="#fff" stroke="#8a8a8a"/><path d="M2.3 4.5h4.4" stroke="#222" stroke-width="1.2"/></svg>
<svg style="left:338px;top:382.9px;" width="12.8" height="12.8" viewBox="0 0 12.8 12.8"><rect x="0.75" y="0.75" width="11.3" height="11.3" fill="#fff" stroke="#333" stroke-width="1.3"/><path d="M2.5600000000000005 6.4 L5.376 9.472 L10.496 3.5840000000000005" fill="none" stroke="#3a3a3a" stroke-width="1.45"/></svg>
<div dir="rtl" style="right:610.8px;top:382.35px;font-size:13.9px;line-height:13.9px;color:#4a4a4a;">בית</div>
<svg style="left:321.5px;top:400.9px;" width="9" height="9" viewBox="0 0 9 9"><rect x="0.5" y="0.5" width="8" height="8" fill="#fff" stroke="#8a8a8a"/><path d="M2.3 4.5h4.4" stroke="#222" stroke-width="1.2"/><path d="M4.5 2.3v4.4" stroke="#222" stroke-width="1.2"/></svg>
<div dir="rtl" style="right:628.5px;top:398.45px;font-size:13.9px;line-height:13.9px;color:#4a4a4a;">לוח</div>
<svg style="left:321.5px;top:414.8px;" width="9" height="9" viewBox="0 0 9 9"><rect x="0.5" y="0.5" width="8" height="8" fill="#fff" stroke="#8a8a8a"/><path d="M2.3 4.5h4.4" stroke="#222" stroke-width="1.2"/><path d="M4.5 2.3v4.4" stroke="#222" stroke-width="1.2"/></svg>
<div dir="rtl" style="right:628.5px;top:412.35px;font-size:13.9px;line-height:13.9px;color:#4a4a4a;">גופן</div>
<svg style="left:321.5px;top:429.5px;" width="9" height="9" viewBox="0 0 9 9"><rect x="0.5" y="0.5" width="8" height="8" fill="#fff" stroke="#8a8a8a"/><path d="M2.3 4.5h4.4" stroke="#222" stroke-width="1.2"/><path d="M4.5 2.3v4.4" stroke="#222" stroke-width="1.2"/></svg>
<div dir="rtl" style="right:628.5px;top:427.05px;font-size:13.9px;line-height:13.9px;color:#4a4a4a;">סגנונות</div>
<svg style="left:321.5px;top:441.5px;" width="9" height="9" viewBox="0 0 9 9"><rect x="0.5" y="0.5" width="8" height="8" fill="#fff" stroke="#8a8a8a"/><path d="M2.3 4.5h4.4" stroke="#222" stroke-width="1.2"/><path d="M4.5 2.3v4.4" stroke="#222" stroke-width="1.2"/></svg>
<div dir="rtl" style="right:628.5px;top:439.05px;font-size:13.9px;line-height:13.9px;color:#4a4a4a;">סגנונות</div>
<div style="left:93px;top:454.5px;width:225px;height:4.5px;overflow:hidden;background:#dcdcdf"><div dir="rtl" style="position:absolute;right:1px;top:-0.6px;font-size:13.2px;line-height:13.2px;color:#444">קבוצה חדשה (מותאם אישית)</div></div>
<div style="left:94.6px;top:459.8px;width:275px;height:211.9px;background:#fff;box-sizing:border-box;border:1px solid #adadad;border-left:none;border-bottom:none;border-top:none;"></div>
<div style="left:240px;top:458px;width:100px;height:10px;overflow:hidden"><div dir="rtl" style="position:absolute;right:23px;top:-4.6px;font-size:13.6px;line-height:13.6px;color:#4a4a4a">סגנונות</div></div>
<svg style="left:322px;top:458.5px;" width="9" height="7" viewBox="0 0 9 7"><rect x="0.5" y="-2" width="8" height="8" fill="#fff" stroke="#8a8a8a"/><path d="M2.3 2.5h4.4" stroke="#222" stroke-width="1.2"/></svg>
<div style="left:81.9px;top:670.7px;width:287.7px;height:1px;background:#a8a8a8;"></div>
<div style="left:94.1px;top:459.8px;width:1px;height:209.2px;background:#adadad;"></div>
<div style="left:75px;top:460px;width:1px;height:209px;background:#adadad;"></div>
<div style="left:77.1px;top:460px;width:1px;height:206px;background:#b5b5b5;"></div>
<div style="left:75px;top:668.3px;width:19.6px;height:1px;background:#adadad;"></div>
<div style="left:77.1px;top:653.2px;width:4.8px;height:1px;background:#adadad;"></div>
<div style="left:81.9px;top:656.4px;width:12.7px;height:12.2px;background:#fff;border-top:1px solid #b0b0b0;box-sizing:border-box;"></div>
<svg style="left:84.2px;top:662px;" width="8" height="4" viewBox="0 0 8 4"><path d="M0.5 0.5 L4 3.5 L7.5 0.5Z" fill="#555"/></svg>
<div style="left:96px;top:467px;width:222.4px;height:13.4px;background:#0078d7;"></div>
<div dir="rtl" style="right:629px;top:467.3px;font-size:13.2px;line-height:13.2px;color:#fff;">קבוצה חדשה (מותאם אישית)</div>
<svg style="left:321.5px;top:481.9px;" width="9" height="9" viewBox="0 0 9 9"><rect x="0.5" y="0.5" width="8" height="8" fill="#fff" stroke="#8a8a8a"/><path d="M2.3 4.5h4.4" stroke="#222" stroke-width="1.2"/><path d="M4.5 2.3v4.4" stroke="#222" stroke-width="1.2"/></svg>
<div dir="rtl" style="right:628.5px;top:479.8px;font-size:13.2px;line-height:13.2px;color:#4a4a4a;">עריכה</div>
<svg style="left:356.3px;top:495.5px;" width="9" height="9" viewBox="0 0 9 9"><rect x="0.5" y="0.5" width="8" height="8" fill="#fff" stroke="#8a8a8a"/><path d="M2.3 4.5h4.4" stroke="#222" stroke-width="1.2"/><path d="M4.5 2.3v4.4" stroke="#222" stroke-width="1.2"/></svg>
<svg style="left:339.1px;top:493.7px;" width="12.6" height="12.6" viewBox="0 0 12.6 12.6"><rect x="0.75" y="0.75" width="11.1" height="11.1" fill="#fff" stroke="#333" stroke-width="1.3"/><path d="M2.52 6.3 L5.292 9.324 L10.331999999999999 3.528" fill="none" stroke="#3a3a3a" stroke-width="1.45"/></svg>
<div dir="rtl" style="right:609.7px;top:493.4px;font-size:13.2px;line-height:13.2px;color:#4a4a4a;">הוספה</div>
<svg style="left:356.3px;top:510px;" width="9" height="9" viewBox="0 0 9 9"><rect x="0.5" y="0.5" width="8" height="8" fill="#fff" stroke="#8a8a8a"/><path d="M2.3 4.5h4.4" stroke="#222" stroke-width="1.2"/><path d="M4.5 2.3v4.4" stroke="#222" stroke-width="1.2"/></svg>
<svg style="left:339.1px;top:508.2px;" width="12.6" height="12.6" viewBox="0 0 12.6 12.6"><rect x="0.75" y="0.75" width="11.1" height="11.1" fill="#fff" stroke="#333" stroke-width="1.3"/></svg>
<div dir="rtl" style="right:609.7px;top:507.9px;font-size:13.2px;line-height:13.2px;color:#4a4a4a;">ציור</div>
<svg style="left:356.3px;top:524.5px;" width="9" height="9" viewBox="0 0 9 9"><rect x="0.5" y="0.5" width="8" height="8" fill="#fff" stroke="#8a8a8a"/><path d="M2.3 4.5h4.4" stroke="#222" stroke-width="1.2"/><path d="M4.5 2.3v4.4" stroke="#222" stroke-width="1.2"/></svg>
<svg style="left:339.1px;top:522.7px;" width="12.6" height="12.6" viewBox="0 0 12.6 12.6"><rect x="0.75" y="0.75" width="11.1" height="11.1" fill="#fff" stroke="#333" stroke-width="1.3"/><path d="M2.52 6.3 L5.292 9.324 L10.331999999999999 3.528" fill="none" stroke="#3a3a3a" stroke-width="1.45"/></svg>
<div dir="rtl" style="right:609.7px;top:522.4px;font-size:13.2px;line-height:13.2px;color:#4a4a4a;">עיצוב</div>
<svg style="left:356.3px;top:539.5px;" width="9" height="9" viewBox="0 0 9 9"><rect x="0.5" y="0.5" width="8" height="8" fill="#fff" stroke="#8a8a8a"/><path d="M2.3 4.5h4.4" stroke="#222" stroke-width="1.2"/><path d="M4.5 2.3v4.4" stroke="#222" stroke-width="1.2"/></svg>
<svg style="left:339.1px;top:537.7px;" width="12.6" height="12.6" viewBox="0 0 12.6 12.6"><rect x="0.75" y="0.75" width="11.1" height="11.1" fill="#fff" stroke="#333" stroke-width="1.3"/><path d="M2.52 6.3 L5.292 9.324 L10.331999999999999 3.528" fill="none" stroke="#3a3a3a" stroke-width="1.45"/></svg>
<div dir="rtl" style="right:609.7px;top:537.4px;font-size:13.2px;line-height:13.2px;color:#4a4a4a;">פריסה</div>
<svg style="left:356.3px;top:554px;" width="9" height="9" viewBox="0 0 9 9"><rect x="0.5" y="0.5" width="8" height="8" fill="#fff" stroke="#8a8a8a"/><path d="M2.3 4.5h4.4" stroke="#222" stroke-width="1.2"/><path d="M4.5 2.3v4.4" stroke="#222" stroke-width="1.2"/></svg>
<svg style="left:339.1px;top:552.2px;" width="12.6" height="12.6" viewBox="0 0 12.6 12.6"><rect x="0.75" y="0.75" width="11.1" height="11.1" fill="#fff" stroke="#333" stroke-width="1.3"/><path d="M2.52 6.3 L5.292 9.324 L10.331999999999999 3.528" fill="none" stroke="#3a3a3a" stroke-width="1.45"/></svg>
<div dir="rtl" style="right:609.7px;top:551.9px;font-size:13.2px;line-height:13.2px;color:#4a4a4a;">הפניות</div>
<svg style="left:356.3px;top:568.5px;" width="9" height="9" viewBox="0 0 9 9"><rect x="0.5" y="0.5" width="8" height="8" fill="#fff" stroke="#8a8a8a"/><path d="M2.3 4.5h4.4" stroke="#222" stroke-width="1.2"/><path d="M4.5 2.3v4.4" stroke="#222" stroke-width="1.2"/></svg>
<svg style="left:339.1px;top:566.7px;" width="12.6" height="12.6" viewBox="0 0 12.6 12.6"><rect x="0.75" y="0.75" width="11.1" height="11.1" fill="#fff" stroke="#333" stroke-width="1.3"/><path d="M2.52 6.3 L5.292 9.324 L10.331999999999999 3.528" fill="none" stroke="#3a3a3a" stroke-width="1.45"/></svg>
<div dir="rtl" style="right:609.7px;top:566.4px;font-size:13.2px;line-height:13.2px;color:#4a4a4a;">דברי דואר</div>
<svg style="left:356.3px;top:583.5px;" width="9" height="9" viewBox="0 0 9 9"><rect x="0.5" y="0.5" width="8" height="8" fill="#fff" stroke="#8a8a8a"/><path d="M2.3 4.5h4.4" stroke="#222" stroke-width="1.2"/><path d="M4.5 2.3v4.4" stroke="#222" stroke-width="1.2"/></svg>
<svg style="left:339.1px;top:581.7px;" width="12.6" height="12.6" viewBox="0 0 12.6 12.6"><rect x="0.75" y="0.75" width="11.1" height="11.1" fill="#fff" stroke="#333" stroke-width="1.3"/><path d="M2.52 6.3 L5.292 9.324 L10.331999999999999 3.528" fill="none" stroke="#3a3a3a" stroke-width="1.45"/></svg>
<div dir="rtl" style="right:609.7px;top:581.4px;font-size:13.2px;line-height:13.2px;color:#4a4a4a;">סקירה</div>
<svg style="left:356.3px;top:598.5px;" width="9" height="9" viewBox="0 0 9 9"><rect x="0.5" y="0.5" width="8" height="8" fill="#fff" stroke="#8a8a8a"/><path d="M2.3 4.5h4.4" stroke="#222" stroke-width="1.2"/><path d="M4.5 2.3v4.4" stroke="#222" stroke-width="1.2"/></svg>
<svg style="left:339.1px;top:596.7px;" width="12.6" height="12.6" viewBox="0 0 12.6 12.6"><rect x="0.75" y="0.75" width="11.1" height="11.1" fill="#fff" stroke="#333" stroke-width="1.3"/><path d="M2.52 6.3 L5.292 9.324 L10.331999999999999 3.528" fill="none" stroke="#3a3a3a" stroke-width="1.45"/></svg>
<div dir="rtl" style="right:609.7px;top:596.4px;font-size:13.2px;line-height:13.2px;color:#4a4a4a;">תצוגה</div>
<svg style="left:356.3px;top:613.5px;" width="9" height="9" viewBox="0 0 9 9"><rect x="0.5" y="0.5" width="8" height="8" fill="#fff" stroke="#8a8a8a"/><path d="M2.3 4.5h4.4" stroke="#222" stroke-width="1.2"/><path d="M4.5 2.3v4.4" stroke="#222" stroke-width="1.2"/></svg>
<svg style="left:339.1px;top:611.7px;" width="12.6" height="12.6" viewBox="0 0 12.6 12.6"><rect x="0.75" y="0.75" width="11.1" height="11.1" fill="#fff" stroke="#333" stroke-width="1.3"/></svg>
<div dir="rtl" style="right:609.7px;top:611.4px;font-size:13.2px;line-height:13.2px;color:#4a4a4a;">מפתחים</div>
<svg style="left:339.1px;top:626.7px;" width="12.6" height="12.6" viewBox="0 0 12.6 12.6"><rect x="0.75" y="0.75" width="11.1" height="11.1" fill="#fff" stroke="#333" stroke-width="1.3"/><path d="M2.52 6.3 L5.292 9.324 L10.331999999999999 3.528" fill="none" stroke="#3a3a3a" stroke-width="1.45"/></svg>
<div dir="rtl" style="right:609.7px;top:626.4px;font-size:13.2px;line-height:13.2px;color:#4a4a4a;">תוספות</div>
<svg style="left:356.3px;top:643.2px;" width="9" height="9" viewBox="0 0 9 9"><rect x="0.5" y="0.5" width="8" height="8" fill="#fff" stroke="#8a8a8a"/><path d="M2.3 4.5h4.4" stroke="#222" stroke-width="1.2"/><path d="M4.5 2.3v4.4" stroke="#222" stroke-width="1.2"/></svg>
<svg style="left:339.1px;top:641.4px;" width="12.6" height="12.6" viewBox="0 0 12.6 12.6"><rect x="0.75" y="0.75" width="11.1" height="11.1" fill="#fff" stroke="#333" stroke-width="1.3"/><path d="M2.52 6.3 L5.292 9.324 L10.331999999999999 3.528" fill="none" stroke="#3a3a3a" stroke-width="1.45"/></svg>
<div dir="rtl" style="right:609.7px;top:641.1px;font-size:13.2px;line-height:13.2px;color:#4a4a4a;">עזרה</div>
<svg style="left:339.1px;top:656.1px;" width="12.6" height="12.6" viewBox="0 0 12.6 12.6"><rect x="0.75" y="0.75" width="11.1" height="11.1" fill="#fff" stroke="#333" stroke-width="1.3"/></svg>
<div dir="rtl" style="right:609.7px;top:655.8px;font-size:13.2px;line-height:13.2px;color:#4a4a4a;">כרטיסיה חדשה (מותאם אישית)</div>
<div style="left:75.2px;top:672.3px;width:1px;height:20.1px;background:#adadad;"></div>
<div style="left:75.2px;top:672.3px;width:6.8px;height:1px;background:#adadad;"></div>
<div style="left:75.2px;top:692.4px;width:6.8px;height:1px;background:#adadad;"></div>
<div style="left:81.9px;top:674.4px;width:74.6px;height:20.1px;background:#fdfdfd;box-sizing:border-box;border:1px solid #b5b5b5;border-bottom:2px solid #a8a8a8;"></div>
<div dir="rtl" style="right:798.6px;top:678.7px;font-size:13.2px;line-height:13.2px;color:#333;"><u>ש</u>ינוי שם...</div>
<div style="left:164.4px;top:674.4px;width:93.6px;height:19.6px;background:#fdfdfd;box-sizing:border-box;border:1px solid #8fb0e0;"></div>
<div dir="rtl" style="left:-188.7px;width:800px;text-align:center;top:678.2px;font-size:13.2px;line-height:13.2px;color:#333;">קבוצה <u>ח</u>דשה</div>
<div style="left:265.8px;top:675px;width:103.8px;height:19.3px;background:#fdfdfd;box-sizing:border-box;border:1px solid #adadad;"></div>
<div dir="rtl" style="left:-82.3px;width:800px;text-align:center;top:677.9px;font-size:13.2px;line-height:13.2px;color:#333;"><u>כ</u>רטיסיה חדשה</div>
<div dir="rtl" style="right:576.5px;top:699.9px;font-size:13.2px;line-height:13.2px;color:#4a4a4a;">התאמות אישיות:</div>
<div style="left:190px;top:697px;width:75.5px;height:19px;background:#fdfdfd;box-sizing:border-box;border:1px solid #adadad;border-bottom:2px solid #a5a5a5;border-right:2px solid #b5b5b5;"></div>
<div dir="rtl" style="right:693.5px;top:700.7px;font-size:13.2px;line-height:13.2px;color:#333;"><u>א</u>יפוס</div>
<svg style="left:204px;top:705.5px;" width="8" height="4" viewBox="0 0 8 4"><path d="M0 0H7.5L3.75 3.5Z" fill="#333"/></svg>
<svg style="left:178px;top:700.3px;" width="11" height="11" viewBox="0 0 11 11"><circle cx="5.5" cy="5.5" r="4.8" fill="#fff" stroke="#6a8fd0" stroke-width="1"/><rect x="4.9" y="4.6" width="1.2" height="3.8" fill="#6a8fd0"/><rect x="4.9" y="2.6" width="1.2" height="1.2" fill="#6a8fd0"/></svg>
<div style="left:190px;top:719.2px;width:75.5px;height:19.8px;background:#fdfdfd;box-sizing:border-box;border:1px solid #adadad;border-bottom:2px solid #a5a5a5;border-right:2px solid #b5b5b5;"></div>
<div dir="rtl" style="right:687.7px;top:722.4px;font-size:13.2px;line-height:13.2px;color:#333;"><u>י</u>בא/יצא</div>
<svg style="left:198px;top:727.5px;" width="8" height="4" viewBox="0 0 8 4"><path d="M0 0H7.5L3.75 3.5Z" fill="#333"/></svg>
<svg style="left:178px;top:723.2px;" width="11" height="11" viewBox="0 0 11 11"><circle cx="5.5" cy="5.5" r="4.8" fill="#fff" stroke="#6a8fd0" stroke-width="1"/><rect x="4.9" y="4.6" width="1.2" height="3.8" fill="#6a8fd0"/><rect x="4.9" y="2.6" width="1.2" height="1.2" fill="#6a8fd0"/></svg>
<svg style="left:0;top:0;mix-blend-mode:multiply;pointer-events:none" width="945" height="788" viewBox="0 0 945 788"><path d="M784.8 14 C784.8 6 787 1 793 0 L806 0 C809 1 810.5 2.5 812 4 L823 8.3 L828 8.3 L828 4.8 L833.8 4.8 L833.8 8 L849 8 L849 23.8 L833.8 23.8 L833.8 33 C833 35.5 831 36.2 826 36.2 L800 36.2 C791 36 786 33 784.8 27 Z" fill="#ffff00"/><path d="M91.6 40 C92 34 96 31.6 103 31.6 L125.6 31.6 L146 37 C148.5 38 149 40 149 44 L149 93 L117.5 93 L103.3 95.5 L91.6 57.5 Z" fill="#ffff00"/><path d="M485.4 209 L715 209 L715 227 C680 228.5 600 229 540 228 L485.4 227Z" fill="#ffff00"/><path d="M735 344 C738 340 750 338 780 338.5 L800 341.5 L931 342 L931 366.5 L735 366.5 Z M936 341 L945 339.5 L945 364 L936 364 Z" fill="#ffff00"/><path d="M375 485.7 L462.4 496.2 L462.4 511.3 L430 513 L375 502.6Z" fill="#ffff00"/><path d="M466.8 404 C490 401 515 398 536 397 C560 398 580 402 600 407 C625 412 650 412.5 690 412.5 L735 412 L735 429 C700 429.5 660 429 625 428.5 C600 426 585 420 565 415.5 C550 412.5 530 413 515 414.5 C500 416 485 418 466.8 419.5 Z" fill="#ffff00"/><path d="M167.2 678 C168 673 172 671.7 180 671.7 L258 671.5 C260 672 261.4 674 261.4 680 L261.4 699.2 L240 698.3 C210 698 185 699 167.2 699 Z" fill="#ffff00"/><path d="M111.7 756.5 C120 754 160 754 180 754 L203 754 L203 770.6 L111.7 770.6Z" fill="#ffff00"/></svg>
<div style="left:247px;top:428.5px;width:364.6px;height:19.8px;background:#fff;box-sizing:border-box;border:1px solid #a0a0a0;box-shadow:2px 2px 3px rgba(0,0,0,0.10);"></div>
<div dir="rtl" style="right:338.3px;top:432.55px;font-size:12.9px;line-height:12.9px;color:#4a4a4a;">הכרטיסיה הוספה | איורים | צילום מסך (ScreenshotInsertGallery)</div>
</div></body></html>
